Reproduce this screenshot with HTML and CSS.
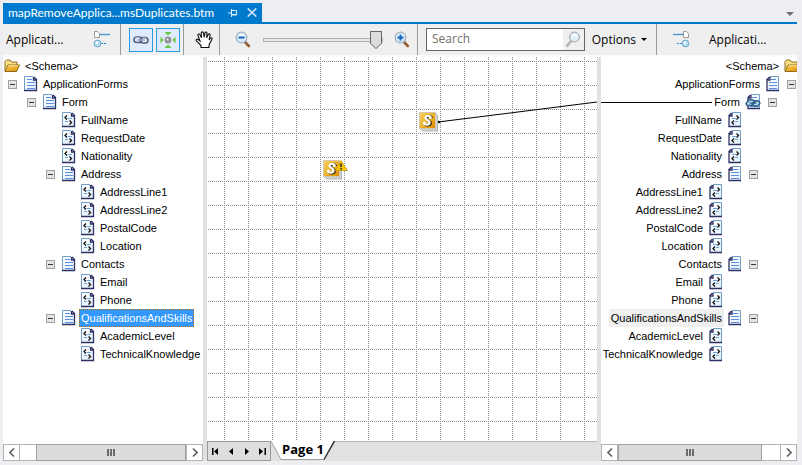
FILE: index.html
```html
<!DOCTYPE html>
<html lang="en">
<head>
<meta charset="utf-8">
<title>mapRemoveApplica...msDuplicates.btm</title>
<link rel="stylesheet" href="styles.css">
</head>
<body>
<svg class="defs" aria-hidden="true">
  <defs>
    <linearGradient id="gold" x1="0" y1="0" x2="1" y2="1"><stop offset="0" stop-color="#f9d35c"/><stop offset="1" stop-color="#e08c00"/></linearGradient>
    <linearGradient id="paper" x1="0" y1="0" x2="1" y2="1"><stop offset="0" stop-color="#ffffff"/><stop offset="1" stop-color="#e2effa"/></linearGradient>
    <symbol id="doc" viewBox="0 0 14 16">
      <path d="M0 1h9l3 3v11H0z" fill="url(#paper)"/>
      <path d="M.5 15V.5H9" fill="none" stroke="#6f9cc8"/>
      <path d="M0 14.500h12.500V4.500M9.500 1v3h3.500M10 1l3 3" fill="none" stroke="#2d3163" stroke-width="1.300"/>
      <path d="M3 3.500h5M3 6.500h8M3 9.500h8M3 12.500h8" stroke="#5b8fe0"/>
    </symbol>
    <symbol id="attr" viewBox="0 0 14 16">
      <path d="M0 1h9l3 3v11H0z" fill="url(#paper)"/>
      <path d="M.5 15V.5H9" fill="none" stroke="#6f9cc8"/>
      <path d="M0 14.500h12.500V4.500M9.500 1v3h3.500M10 1l3 3" fill="none" stroke="#2d3163" stroke-width="1.300"/>
      <path d="M5 3.500l-2 2 2 2M7.500 8.500l2 2-2 2" fill="none" stroke="#111" stroke-width="1.300"/>
      <path d="M6 6.500h4M3 9.500h3" stroke="#6aa6dc"/>
    </symbol>
    <symbol id="doc-r" viewBox="0 0 14 16">
      <path d="M13 1H4L1 4v11h12z" fill="url(#paper)"/>
      <path d="M4 .5h8.500V15" fill="none" stroke="#6f9cc8"/>
      <path d="M13 14.500H1V4.500M4 1v3H.5M3.500 1l-3 3" fill="none" stroke="#2d3163" stroke-width="1.300"/>
      <path d="M5 3.500h5M3 6.500h8M3 9.500h8M3 12.500h8" stroke="#5b8fe0"/>
    </symbol>
    <symbol id="attr-r" viewBox="0 0 14 16">
      <path d="M13 1H4L1 4v11h12z" fill="url(#paper)"/>
      <path d="M4 .5h8.500V15" fill="none" stroke="#6f9cc8"/>
      <path d="M13 14.500H1V4.500M4 1v3H.5M3.500 1l-3 3" fill="none" stroke="#2d3163" stroke-width="1.300"/>
      <path d="M8.500 3.500l2 2-2 2M6 8.500l-2 2 2 2" fill="none" stroke="#111" stroke-width="1.300"/>
      <path d="M4 6.500h4M7 9.500h3" stroke="#6aa6dc"/>
    </symbol>
    <symbol id="folder" viewBox="0 0 16 14">
      <path d="M1 12V2.500L2.500 1H6l1.500 2H13v3" fill="#fbe08a" stroke="#8d6a1c"/>
      <path d="M1 12.500L4 6h11.500l-3 6.500z" fill="url(#gold)" stroke="#8d6a1c"/>
      <path d="M4.500 6.800H14" stroke="#ffeaa0"/>
    </symbol>
    <symbol id="chain" viewBox="0 0 16 10">
      <rect x="1" y="2" width="8" height="5.500" rx="2.700" fill="none" stroke="#56617f" stroke-width="1.600"/>
      <rect x="7" y="2.500" width="8" height="5.500" rx="2.700" fill="none" stroke="#56617f" stroke-width="1.600"/>
      <path d="M4 5h8" stroke="#9fb1d4" stroke-width="1.500"/>
      <path d="M2.500 2.500H7M9 3h4" stroke="#b9c3da" stroke-width=".7"/>
    </symbol>
    <symbol id="chain-blue" viewBox="0 0 16 10">
      <path d="M1 5.500L4 2h4l2 2-3 3.500H2zM7 6l2.500-3h4L15 5l-2 3H9z" fill="#b8dbee" stroke="#2c5f8a" stroke-width="1.400"/>
      <path d="M4.500 5h7" stroke="#2c5f8a" stroke-width="1.200"/>
    </symbol>
    <symbol id="lens" viewBox="0 0 16 17">
      <path d="M9.500 10.500l4.300 4.500" stroke="#9a5c2e" stroke-width="2.600" stroke-linecap="round"/>
      <path d="M9.500 10l1.500 1.500" stroke="#777" stroke-width="2"/>
      <circle cx="6.500" cy="6.500" r="5.400" fill="#d3e9fb" stroke="#a4afbb" stroke-width="1.200"/>
      <path d="M2.800 5.500a4 4 0 0 1 7.400 0z" fill="#f8fcff"/>
    </symbol>
    <symbol id="script" viewBox="0 0 20 20">
      <path d="M1 17l2.500 2.500H19V3.500L17 1z" fill="#b4b4b4"/>
      <path d="M1 17l1.500 1.500H18V2.500L17 1z" fill="#d2d2d2"/>
      <rect x=".5" y=".5" width="16" height="16" fill="url(#gold)" stroke="#cfc8b4"/>
      <path d="M12.800 6.200C12 3.300 7.600 3.800 7.600 6.300c0 2.200 4 2.600 4 4.700 0 2.500-4.600 3-6 .6" fill="none" stroke="#2a1d02" stroke-width="2.600"/>
      <path d="M11.800 5.600C11 2.900 6.600 3.400 6.600 5.800c0 2.200 4 2.600 4 4.700 0 2.500-4.600 3-6 .6" fill="none" stroke="#fff" stroke-width="2.200"/>
      <circle cx="11.300" cy="5.400" r="1.500" fill="#fff"/><circle cx="5.300" cy="11" r="1.500" fill="#fff"/>
    </symbol>
  </defs>
</svg>

<header class="tabs">
  <div class="tab">
    <span class="tab-title">mapRemoveApplica...msDuplicates.btm</span>
    <button class="tab-btn" aria-label="Pin"><svg width="10" height="8" viewBox="0 0 10 8"><path d="M0 4h3M3.500 0v8M3.500 1.500h5v4.500h-5M3.500 5.500h5" fill="none" stroke="#dcebf8"/></svg></button>
    <button class="tab-btn close" aria-label="Close"><svg width="10" height="9" viewBox="0 0 10 9"><path d="M.7.5l8.600 8M9.300.5l-8.600 8" stroke="#d6e8f7" stroke-width="1.600"/></svg></button>
  </div>
  <button class="tab-menu" aria-label="Window list"><svg width="8" height="4" viewBox="0 0 8 4"><path d="M0 0h8L4 4z" fill="#717171"/></svg></button>
</header>

<div class="toolbar">
  <div class="group source">
    <span class="schema-name">Applicati...</span>
    <button class="tool" aria-label="Source indent"><svg width="17" height="17" viewBox="0 0 17 17"><path d="M1.500.5h3l2 2v4h-5z" fill="#fff" stroke="#999"/><path d="M7 3.500h10" stroke="#4a9bd0" stroke-width="1.400"/><path d="M8 12.500h6" stroke="#2e8bc9" stroke-dasharray="2 1"/><circle cx="4.500" cy="12.500" r="3.400" fill="#b9def2" stroke="#6aa6c9"/><circle cx="3.800" cy="11.600" r="1.300" fill="#fff"/></svg></button>
  </div>
  <div class="group toggles">
    <button class="tool on" aria-label="Show relevant links"><svg width="16" height="10"><use href="#chain"/></svg></button>
    <button class="tool on" aria-label="Auto scroll"><svg width="18" height="18" viewBox="0 0 18 18"><path d="M5.500 1h7L9 4.500zM5.500 17h7L9 13.500zM1.500 5.500v7L4.500 9zM16.500 5.500v7L13.500 9z" fill="#6cc53f"/><circle cx="9" cy="9" r="2.900" fill="#a3a3a3" stroke="#777"/><circle cx="8.300" cy="8.200" r="1.100" fill="#ddd"/></svg></button>
  </div>
  <div class="group pan">
    <button class="tool" aria-label="Pan"><svg width="18" height="18" viewBox="0 0 18 18"><path d="M6 16.500v-2L1.500 10c-1-1.400.6-2.500 1.700-1.500L5 10 3 4.500c-.4-1.500 1.600-2 2-.8l1.500 3L6.300 2c0-1.500 2-1.500 2.200 0l.7 4.500L10 1.800c.3-1.300 2-1 2 .3l-.3 4.700L13.300 3.500c.6-1.200 2-.5 1.800.7l-1 4.600 1.400-1.700c1-.8 2 0 1.400 1.200L14 14v2.500z" fill="#fff" stroke="#111" stroke-width="1.100"/></svg></button>
  </div>
  <div class="group zoom">
    <button class="tool" aria-label="Zoom out"><svg width="16" height="17" viewBox="0 0 16 17"><use href="#lens"/><path d="M3.500 6.500h6" stroke="#1763bd" stroke-width="2"/></svg></button>
    <input class="slider" type="range" min="0" max="100" value="100" aria-label="Zoom">
    <button class="tool" aria-label="Zoom in"><svg width="16" height="17" viewBox="0 0 16 17"><use href="#lens"/><path d="M3.500 6.500h6M6.500 3.500v6" stroke="#1763bd" stroke-width="2"/></svg></button>
  </div>
  <div class="group find">
    <div class="search">
      <input type="text" placeholder="Search" aria-label="Search">
      <button aria-label="Find"><svg width="16" height="17" viewBox="0 0 16 17"><path d="M6.500 9.500l-5 6" stroke="#999" stroke-width="2.400"/><path d="M6.500 9.500l-5 6" stroke="#ddd" stroke-width="1"/><circle cx="9.500" cy="6" r="4.900" fill="#e2f0fa" stroke="#9c9c9c"/><path d="M6.300 5a3.600 3.600 0 0 1 6.300 0z" fill="#fff"/></svg></button>
    </div>
    <button class="options">Options<svg width="6" height="3" viewBox="0 0 6 3"><path d="M0 0h6L3 3z"/></svg></button>
  </div>
  <div class="group target">
    <button class="tool" aria-label="Target indent"><svg width="17" height="17" viewBox="0 0 17 17"><path d="M10.500.5h3l2 2v4h-5z" fill="#fff" stroke="#999"/><path d="M0 3.500h10" stroke="#4a9bd0" stroke-width="1.400"/><path d="M4 12.500h6" stroke="#2e8bc9" stroke-dasharray="2 1"/><circle cx="12.500" cy="12.500" r="3.400" fill="#b9def2" stroke="#6aa6c9"/><circle cx="11.800" cy="11.600" r="1.300" fill="#fff"/></svg></button>
    <span class="schema-name">Applicati...</span>
  </div>
</div>

<main>
  <section class="panel left">
    <ul class="tree">
      <li><div class="row root"><svg width="16" height="14"><use href="#folder"/></svg><span class="label">&lt;Schema&gt;</span></div></li>
      <li><div class="row"><button class="toggle" aria-label="Collapse"></button><svg width="14" height="16"><use href="#doc"/></svg><span class="label">ApplicationForms</span></div>
        <ul>
          <li><div class="row"><button class="toggle" aria-label="Collapse"></button><svg width="14" height="16"><use href="#doc"/></svg><span class="label">Form</span></div>
            <ul>
              <li><div class="row leaf"><svg width="14" height="16"><use href="#attr"/></svg><span class="label">FullName</span></div></li>
              <li><div class="row leaf"><svg width="14" height="16"><use href="#attr"/></svg><span class="label">RequestDate</span></div></li>
              <li><div class="row leaf"><svg width="14" height="16"><use href="#attr"/></svg><span class="label">Nationality</span></div></li>
              <li><div class="row"><button class="toggle" aria-label="Collapse"></button><svg width="14" height="16"><use href="#doc"/></svg><span class="label">Address</span></div>
                <ul>
                  <li><div class="row leaf"><svg width="14" height="16"><use href="#attr"/></svg><span class="label">AddressLine1</span></div></li>
                  <li><div class="row leaf"><svg width="14" height="16"><use href="#attr"/></svg><span class="label">AddressLine2</span></div></li>
                  <li><div class="row leaf"><svg width="14" height="16"><use href="#attr"/></svg><span class="label">PostalCode</span></div></li>
                  <li><div class="row leaf"><svg width="14" height="16"><use href="#attr"/></svg><span class="label">Location</span></div></li>
                </ul>
              </li>
              <li><div class="row"><button class="toggle" aria-label="Collapse"></button><svg width="14" height="16"><use href="#doc"/></svg><span class="label">Contacts</span></div>
                <ul>
                  <li><div class="row leaf"><svg width="14" height="16"><use href="#attr"/></svg><span class="label">Email</span></div></li>
                  <li><div class="row leaf"><svg width="14" height="16"><use href="#attr"/></svg><span class="label">Phone</span></div></li>
                </ul>
              </li>
              <li><div class="row"><button class="toggle" aria-label="Collapse"></button><svg width="14" height="16"><use href="#doc"/></svg><span class="label selected">QualificationsAndSkills</span></div>
                <ul>
                  <li><div class="row leaf"><svg width="14" height="16"><use href="#attr"/></svg><span class="label">AcademicLevel</span></div></li>
                  <li><div class="row leaf"><svg width="14" height="16"><use href="#attr"/></svg><span class="label">TechnicalKnowledge</span></div></li>
                </ul>
              </li>
            </ul>
          </li>
        </ul>
      </li>
    </ul>
    <div class="scroll">
      <button aria-label="Scroll left"><svg width="6" height="9" viewBox="0 0 6 9"><path d="M5 .5l-4 4 4 4" fill="none" stroke="#606060" stroke-width="1.600"/></svg></button>
      <div class="track start"><div class="thumb"></div></div>
      <button aria-label="Scroll right"><svg width="6" height="9" viewBox="0 0 6 9"><path d="M1 .5l4 4-4 4" fill="none" stroke="#606060" stroke-width="1.600"/></svg></button>
    </div>
  </section>

  <section class="center">
    <div class="grid">
      <svg class="grid-lines" aria-hidden="true">
        <defs><pattern id="dots" x="17" y="4" width="24" height="24" patternUnits="userSpaceOnUse"><path d="M0 .5h24M.5 0v24" stroke="#8c8c8c" stroke-dasharray="1 1" shape-rendering="crispEdges"/></pattern></defs>
        <rect width="100%" height="100%" fill="url(#dots)"/>
        <path d="M231 65L390 45" stroke="#000" stroke-width="1.100"/>
        <circle cx="232" cy="65" r="1.300"/>
      </svg>
      <svg class="node first" width="20" height="20" role="img" aria-label="Scripting functoid"><use href="#script"/></svg>
      <svg class="node second" width="26" height="20" viewBox="0 0 26 20" role="img" aria-label="Scripting functoid, warning"><use href="#script" width="20" height="20"/><path d="M18 .5l6.500 10h-12z" fill="#f7c600" stroke="#c89b00" stroke-width=".8"/><path d="M18 3.500v3.500M18 8v1.500" stroke="#222" stroke-width="1.500"/></svg>
    </div>
    <div class="pages">
      <div class="nav">
        <button aria-label="First page"><svg width="8" height="7" viewBox="0 0 8 7"><path d="M0 0h1.500v7H0zM6 0v7L2 3.500z"/></svg></button>
        <button aria-label="Previous page"><svg width="8" height="7" viewBox="0 0 8 7"><path d="M6 0v7L2 3.500z"/></svg></button>
        <button aria-label="Next page"><svg width="8" height="7" viewBox="0 0 8 7"><path d="M2 0v7l4-3.500z"/></svg></button>
        <button aria-label="Last page"><svg width="8" height="7" viewBox="0 0 8 7"><path d="M6.500 0H8v7H6.500zM1 0v7l4-3.500z"/></svg></button>
      </div>
      <button class="page"><svg class="page-shape" width="64" height="20" viewBox="0 0 64 20"><path d="M0 0l10 18.500h42L64 0z" fill="#fff"/><path d="M.5 1L10 18.500h43" fill="none" stroke="#a0a0a0"/><path d="M53 18.500L63.500 0" stroke="#333" stroke-width="1.500"/></svg><span>Page 1</span></button>
      <div class="rest"></div>
    </div>
  </section>

  <section class="panel right">
    <ul class="tree">
      <li><div class="row root"><svg width="16" height="14"><use href="#folder"/></svg><span class="label">&lt;Schema&gt;</span></div></li>
      <li><div class="row"><button class="toggle" aria-label="Collapse"></button><svg width="14" height="16"><use href="#doc-r"/></svg><span class="label">ApplicationForms</span></div>
        <ul>
          <li><div class="row linked"><button class="toggle" aria-label="Collapse"></button><svg width="16" height="16" viewBox="0 0 16 16"><use href="#doc-r" x="2" width="14" height="16"/><use href="#chain-blue" y="4" width="16" height="10"/></svg><span class="label">Form</span><span class="wire"></span></div>
            <ul>
              <li><div class="row leaf"><svg width="14" height="16"><use href="#attr-r"/></svg><span class="label">FullName</span></div></li>
              <li><div class="row leaf"><svg width="14" height="16"><use href="#attr-r"/></svg><span class="label">RequestDate</span></div></li>
              <li><div class="row leaf"><svg width="14" height="16"><use href="#attr-r"/></svg><span class="label">Nationality</span></div></li>
              <li><div class="row"><button class="toggle" aria-label="Collapse"></button><svg width="14" height="16"><use href="#doc-r"/></svg><span class="label">Address</span></div>
                <ul>
                  <li><div class="row leaf"><svg width="14" height="16"><use href="#attr-r"/></svg><span class="label">AddressLine1</span></div></li>
                  <li><div class="row leaf"><svg width="14" height="16"><use href="#attr-r"/></svg><span class="label">AddressLine2</span></div></li>
                  <li><div class="row leaf"><svg width="14" height="16"><use href="#attr-r"/></svg><span class="label">PostalCode</span></div></li>
                  <li><div class="row leaf"><svg width="14" height="16"><use href="#attr-r"/></svg><span class="label">Location</span></div></li>
                </ul>
              </li>
              <li><div class="row"><button class="toggle" aria-label="Collapse"></button><svg width="14" height="16"><use href="#doc-r"/></svg><span class="label">Contacts</span></div>
                <ul>
                  <li><div class="row leaf"><svg width="14" height="16"><use href="#attr-r"/></svg><span class="label">Email</span></div></li>
                  <li><div class="row leaf"><svg width="14" height="16"><use href="#attr-r"/></svg><span class="label">Phone</span></div></li>
                </ul>
              </li>
              <li><div class="row"><button class="toggle" aria-label="Collapse"></button><svg width="14" height="16"><use href="#doc-r"/></svg><span class="label marked">QualificationsAndSkills</span></div>
                <ul>
                  <li><div class="row leaf"><svg width="14" height="16"><use href="#attr-r"/></svg><span class="label">AcademicLevel</span></div></li>
                  <li><div class="row leaf"><svg width="14" height="16"><use href="#attr-r"/></svg><span class="label">TechnicalKnowledge</span></div></li>
                </ul>
              </li>
            </ul>
          </li>
        </ul>
      </li>
    </ul>
    <div class="scroll">
      <button aria-label="Scroll left"><svg width="6" height="9" viewBox="0 0 6 9"><path d="M5 .5l-4 4 4 4" fill="none" stroke="#606060" stroke-width="1.600"/></svg></button>
      <div class="track end"><div class="thumb"></div></div>
      <button aria-label="Scroll right"><svg width="6" height="9" viewBox="0 0 6 9"><path d="M1 .5l4 4-4 4" fill="none" stroke="#606060" stroke-width="1.600"/></svg></button>
    </div>
  </section>
</main>
</body>
</html>
```
FILE: styles.css
```css
* { box-sizing: border-box; }
body {
  margin: 0;
  height: 100vh;
  padding: 3px 5px 4px 3px;
  display: flex;
  flex-direction: column;
  background: #eeeef2;
  font: 12px/18px "Open Sans", "Noto Sans", sans-serif;
  color: #000;
  overflow: hidden;
}
button {
  margin: 0;
  padding: 0;
  border: 0;
  background: none;
  font: inherit;
  color: inherit;
  display: flex;
  align-items: center;
  justify-content: center;
}
svg { display: block; flex: none; }
.defs { position: absolute; width: 0; height: 0; }

/* document tab strip */
.tabs {
  flex: none;
  height: 21px;
  display: flex;
  align-items: stretch;
  justify-content: space-between;
  border-bottom: 2px solid #007acc;
}
.tab {
  display: flex;
  align-items: center;
  width: 259px;
  padding: 0 5px;
  background: #007acc;
  color: #fff;
}
.tab-title { flex: 1; white-space: nowrap; font-family: Lato, "Open Sans", sans-serif; }
.tab-btn { margin-right: 9px; }
.tab-btn.close { margin-right: 0; }
.tab-menu { padding: 3px 3px 0 0; }

/* toolbar */
.toolbar {
  flex: none;
  display: flex;
  height: 31px;
  background: #efefef;
}
.group {
  flex: none;
  display: flex;
  align-items: center;
  border-right: 1px solid #999;
}
.schema-name { white-space: nowrap; }
.source { width: 118px; padding: 0 10px 0 3px; justify-content: space-between; }
.toggles { width: 63px; padding-left: 8px; gap: 3px; }
.tool.on {
  width: 24px;
  height: 24px;
  background: #dfeafa;
  border: 1px solid #2a9ee0;
}
.pan { width: 36px; padding-left: 4px; justify-content: center; }
.zoom { width: 198px; padding: 0 7px 0 15px; justify-content: space-between; }
.slider {
  appearance: none;
  width: 120px;
  height: 20px;
  margin: 0;
  background: none;
}
.slider::-webkit-slider-runnable-track {
  height: 4px;
  background: #e7eaea;
  border: 1px solid #b0b0b0;
}
.slider::-webkit-slider-thumb {
  appearance: none;
  width: 12px;
  height: 18px;
  margin-top: -8px;
  background: url("data:image/svg+xml,%3Csvg xmlns='http://www.w3.org/2000/svg' width='12' height='18'%3E%3Cpath d='M.5.500h11v12l-5.500 5-5.500-5z' fill='%23dcdcdc' stroke='%23666'/%3E%3C/svg%3E");
}
.find { flex: 1; min-width: 0; padding: 0 9px 0 8px; gap: 7px; }
.search {
  flex: 1;
  min-width: 0;
  display: flex;
  height: 23px;
  border: 1px solid #666;
  background: #fff;
}
.search input {
  flex: 1;
  min-width: 0;
  padding: 0 0 2px 5px;
  border: 0;
  outline: 0;
  background: none;
  font: inherit;
}
.search input::placeholder { color: #707070; opacity: 1; }
.search button { flex: none; width: 21px; background: #f0f0f0; }
.options { flex: none; gap: 5px; }
.target { width: 140px; padding-left: 16px; gap: 19px; border: 0; }

/* mapper surface */
main {
  flex: 1;
  min-height: 0;
  display: flex;
  padding-top: 2px;
  background: #fbfbfb;
}
.panel {
  flex: none;
  display: flex;
  flex-direction: column;
  background: #fff;
  overflow: hidden;
}
.left { width: 200px; }
.right { width: 196px; }
.tree, .tree ul { list-style: none; margin: 0; padding: 0; }
.tree { flex: 1; min-height: 0; overflow: hidden; font: 11px/18px "Liberation Sans", Arial, sans-serif; }
.row { display: flex; align-items: center; height: 18px; }
.label { padding: 0 2px; white-space: nowrap; }
.toggle {
  width: 9px;
  height: 9px;
  flex: none;
  border: 1px solid #a0a0a0;
  background: #e4e4e4;
}
.toggle::before { content: ""; width: 5px; height: 1px; background: #333; }
.left .tree ul { padding-left: 19px; }
.left .row { padding-left: 5px; }
.left .root { padding-left: 1px; gap: 3px; }
.left .toggle { margin-right: 7px; }
.left .label { margin-left: 3px; }
.left .root .label { margin-left: 0; }
.left .leaf { padding-left: 21px; }
.right .tree ul { padding-right: 19px; }
.right .row { flex-direction: row-reverse; padding-right: 1px; }
.right .root { padding-right: 0; gap: 3px; }
.right .root svg { margin-right: -3px; }
.right .toggle { margin-left: 7px; }
.right .label { margin-right: 4px; }
.right .root .label { margin-right: 0; }
.right .leaf { padding-right: 17px; }
.right .linked .label { margin-right: 3px; }
.wire { flex: 1; height: 1px; background: #000; }
.selected {
  background: #3399ff;
  color: #fff;
  outline: 1px dotted #c86a10;
  outline-offset: -1px;
}
.marked { background: #efefef; }

.scroll { flex: none; display: flex; height: 17px; }
.scroll button { width: 17px; border: 1px solid #b4b4b4; background: #fff; }
.track {
  flex: 1;
  display: flex;
  border: solid #b4b4b4;
  border-width: 1px 0;
  background: #fff;
}
.track.start { padding-left: 16px; }
.track.end { padding-right: 18px; }
.thumb {
  flex: 1;
  margin: -1px 0;
  border: 1px solid #a0a0a0;
  background:
    repeating-linear-gradient(90deg, #6a6a6a 0 2px, #dcdcdc 2px 3px) center / 8px 7px no-repeat #dcdcdc;
}

.center {
  flex: 1;
  min-width: 0;
  display: flex;
  flex-direction: column;
  border: solid #e1e1e1;
  border-width: 0 4px;
  background: #e1e1e1;
}
.grid { flex: 1; min-height: 0; position: relative; background: #fff; overflow: hidden; }
.grid-lines { position: absolute; inset: 0; width: 100%; height: 100%; }
.node { position: absolute; }
.first { left: 212px; top: 55px; }
.second { left: 116px; top: 103px; }
.pages { flex: none; display: flex; height: 20px; }
.nav {
  display: flex;
  width: 64px;
  border: 1px solid #999;
  background: #dedede;
}
.nav button { flex: 1; }
.page { position: relative; width: 64px; font: bold 13px/18px "Open Sans", "Noto Sans", sans-serif; }
.page-shape { position: absolute; left: 0; top: 0; }
.page span { position: relative; padding-bottom: 4px; }
.rest { flex: 1; border-top: 1px solid #b4b4b4; }
```
